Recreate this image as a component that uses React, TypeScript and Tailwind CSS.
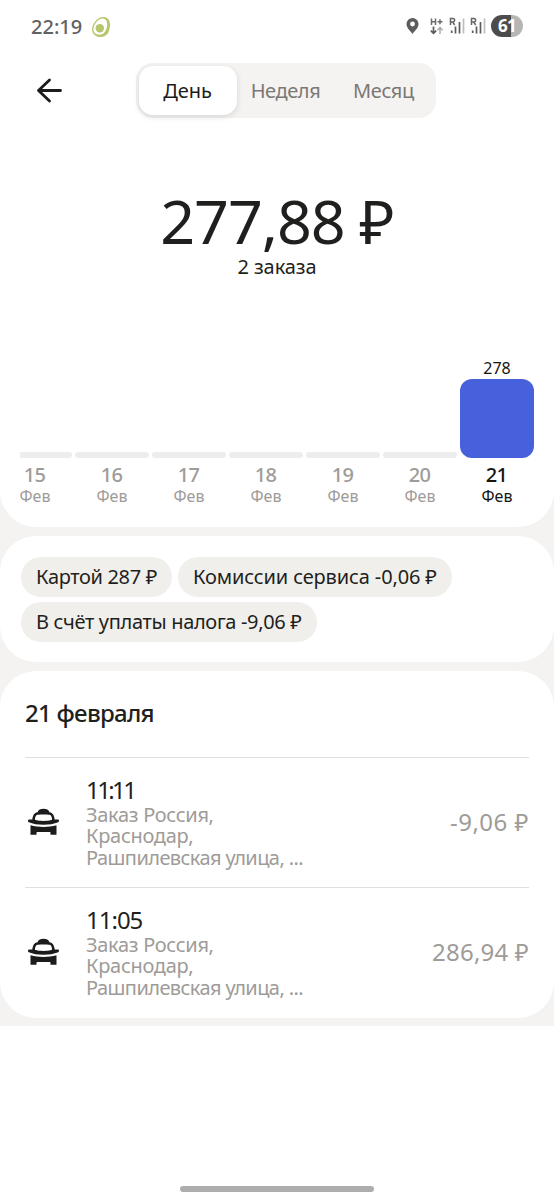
const days = ["15", "16", "17", "18", "19", "20"];

const orders = [
  { time: "11:11", timeClass: "tracking-[-2.6px]", amount: "-9,06 ₽", amountClass: "tracking-[0.5px]" },
  { time: "11:05", timeClass: "tracking-[-1px]", amount: "286,94 ₽", amountClass: "tracking-[0.2px]" },
];

export default function App() {
  return (
    <div className="flex h-[1200px] w-[554px] flex-col overflow-hidden bg-white font-['Noto_Sans',sans-serif] text-[#1f1f1d]">
      <div className="flex flex-col gap-[9px] bg-[#f4f3f1] pb-2">
        <section className="flex h-[527px] flex-col rounded-b-[36px] bg-white">
          <StatusBar />
          <Header />
          <div className="mt-[72px] flex flex-col items-center">
            <h1 className="h-[62px] whitespace-nowrap text-[61px] leading-[62px] tracking-[-1.1px]">277,88 ₽</h1>
            <p className="mt-[3px] h-6 text-[20px] leading-6 tracking-[-0.1px]">2 заказа</p>
          </div>
          <Chart />
        </section>

        <section className="flex h-[126px] flex-col gap-[5px] rounded-[36px] bg-white px-[21px] pt-[21px]">
          <div className="flex gap-[6px]">
            <Chip className="w-[151px]">
              <span className="tracking-[-0.35px]">Картой 287 ₽</span>
            </Chip>
            <Chip className="w-[274px]">
              <span className="tracking-[-0.13px]">Комиссии сервиса -0,06 ₽</span>
            </Chip>
          </div>
          <div className="flex">
            <Chip className="w-[296px]">
              <span className="tracking-[-0.33px]">В счёт уплаты налога -9,06 ₽</span>
            </Chip>
          </div>
        </section>

        <section className="h-[347px] rounded-[36px] bg-white px-[25px]">
          <h2 className="h-[86px] pt-[26px] text-[24px] font-medium leading-8 tracking-[-0.7px]">21 февраля</h2>
          {orders.map((order) => (
            <div key={order.time} className="flex h-[130px] items-center border-t border-[#dfdfde] pb-px">
              <TaxiIcon />
              <div className="ml-[26px] flex-1">
                <p className={`h-[28px] text-[24px] leading-[28px] ${order.timeClass}`}>{order.time}</p>
                <div className="text-[20px] leading-[21.6px] tracking-[-0.3px] text-[#9e9b98]">
                  <p>Заказ Россия,</p>
                  <p>Краснодар,</p>
                  <p className="tracking-[-0.58px]">Рашпилевская улица, ...</p>
                </div>
              </div>
              <p className={`text-[24px] leading-8 text-[#9e9b98] ${order.amountClass}`}>{order.amount}</p>
            </div>
          ))}
        </section>
      </div>

      <div className="mt-auto flex justify-center pb-2">
        <div className="h-[6px] w-[194px] rounded-full bg-[#adadad]" />
      </div>
    </div>
  );
}

function StatusBar() {
  return (
    <div className="flex h-[52px] items-center justify-between pl-[31px] pr-[31px] text-[#626262]">
      <div className="flex items-center gap-[9px] pt-px">
        <span className="text-[20px] font-medium leading-6">22:19</span>
        <AvocadoIcon />
      </div>
      <div className="flex items-center">
        <svg aria-hidden="true" viewBox="0 0 12 16" className="mr-[11px] h-4 w-[13px]">
          <path fill="#5c5c5c" fillRule="evenodd" d="M6 0a6 6 0 0 1 6 6c0 4-4 7-6 10C4 13 0 10 0 6a6 6 0 0 1 6-6Zm0 3.600a2.400 2.400 0 1 0 0 4.800 2.400 2.400 0 0 0 0-4.800Z" />
        </svg>
        <NetworkIcon />
        <SignalIcon />
        <SignalIcon />
        <div className="flex h-[22px] w-8 items-center justify-center rounded-full bg-linear-to-r from-[#4c4c4c] from-62% to-[#b5b5b5] to-62% text-[17px] font-bold tracking-[-0.8px] text-white">
          61
        </div>
      </div>
    </div>
  );
}

function AvocadoIcon() {
  return (
    <svg aria-hidden="true" viewBox="0 0 20 22" className="h-[22px] w-5">
      <path fill="#b5c66c" d="M12 1C16 1 19 3.500 19 8.500c0 6-2 11.500-8.500 12.500C5 21.500 1 18 1 13.500 1 8 6.500 1 12 1Z" />
      <path fill="#fff" d="M11.500 2.400c3 0 4.700 2.300 4.700 5.800 0 5-2.400 9.600-6.700 10.400-4 .6-7.100-1.600-7.100-5.300C2.400 8.700 7 2.400 11.500 2.400Z" />
      <circle cx="8.800" cy="12.300" r="4.200" fill="#b5c66c" />
    </svg>
  );
}

function NetworkIcon() {
  return (
    <svg aria-hidden="true" viewBox="0 0 14 18" className="mr-[5px] h-[18px] w-[14px]" fill="none">
      <path stroke="#6a6a6a" strokeWidth="1.500" d="M1.500 1.500v6.500M5.500 1.500v6.500M1.500 4.700h4M7.500 4.700h5M10 2.200v5" />
      <path stroke="#5c5c5c" strokeWidth="1.700" d="M3.500 9.500v7M.8 13.600l2.700 2.700 2.700-2.700" />
      <path stroke="#a8a8a8" strokeWidth="1.400" d="M10 17v-6.500M7.400 13.200l2.600-2.600 2.600 2.600" />
    </svg>
  );
}

function SignalIcon() {
  return (
    <svg aria-hidden="true" viewBox="0 0 16 18" className="mr-[5px] h-[18px] w-4" fill="none">
      <path stroke="#666" strokeWidth="1.500" d="M1.500 8V1.500h2.400a1.700 1.700 0 0 1 0 3.500H1.500M3.700 5 5.700 8" />
      <path stroke="#5c5c5c" strokeWidth="1.700" d="M2.700 13.500v2.500M6.500 9.500v7M10.500 5v11.500" />
      <path stroke="#bdbdbd" strokeWidth="1.700" d="M14.500 1.500v15" />
    </svg>
  );
}

function Header() {
  return (
    <header className="flex items-center pl-[36px] pt-[11px]">
      <svg aria-hidden="true" viewBox="0 0 26 26" className="h-[26px] w-[26px] fill-none stroke-[#1c1c1a] stroke-[2.8]">
        <path strokeLinecap="round" strokeLinejoin="round" d="M24.500 12.500H2.500M13.500 2 2.500 12.500l11 10.500" />
      </svg>
      <div className="ml-[74px] flex h-[55px] w-[300px] items-center rounded-[17px] bg-[#f4f3f1] text-[20px] tracking-[-0.1px] text-[#7b7875]">
        <div className="ml-[3px] flex h-[49px] w-[98px] items-center justify-center rounded-[14px] bg-white pr-px text-[#1c1c1a] shadow-[0_2px_6px_rgba(0,0,0,0.12)]">
          День
        </div>
        <div className="flex w-[98px] justify-center pr-px tracking-[-0.4px]">Неделя</div>
        <div className="flex w-[98px] justify-center pr-px tracking-[-0.3px]">Месяц</div>
      </div>
    </header>
  );
}

function Chart() {
  return (
    <div className="ml-5 mt-auto flex h-[172px] w-[514px] items-end justify-end gap-[3px] overflow-hidden pb-[20px]">
      {days.map((day) => (
        <div key={day} className="flex w-[74px] shrink-0 flex-col items-center text-[#9e9b98]">
          <div className="h-[6px] w-full rounded-full bg-[#ededed]" />
          <DayLabel day={day} />
        </div>
      ))}
      <div className="flex w-[74px] shrink-0 flex-col items-center text-[#141412]">
        <span className="h-[21px] text-[16px] leading-5">278</span>
        <div className="h-[79px] w-full rounded-[12px] bg-[#4760db]" />
        <DayLabel day="21" />
      </div>
    </div>
  );
}

function DayLabel({ day }: { day: string }) {
  return (
    <>
      <span className="mt-[6px] h-[22px] pr-px text-[20px] font-medium leading-[22px] tracking-[-0.8px]">{day}</span>
      <span className="h-[21px] text-[16px] leading-5">Фев</span>
    </>
  );
}

function Chip({ className, children }: { className: string; children: React.ReactNode }) {
  return (
    <div className={`flex h-[40px] shrink-0 items-center whitespace-nowrap rounded-full bg-[#f0efeb] pb-px pl-[15px] text-[20px] ${className}`}>
      {children}
    </div>
  );
}

function TaxiIcon() {
  return (
    <svg aria-hidden="true" viewBox="0 0 32 28" className="ml-[3px] h-7 w-8" fill="#1c1c1a">
      <path
        fillRule="evenodd"
        d="M9.500 4.300C10.500 1.300 12.500.8 15.500.8s5 .5 6 3.500c3.400.6 4.600 3 5.200 7.200H30c1.300 0 1.400 2.200.2 2.800-4 1.700-9.200 2.500-14.700 2.500S4.800 16 .8 14.300c-1.200-.6-1.100-2.800.2-2.800h3.300c.6-4.200 1.800-6.600 5.200-7.200ZM9.500 6.700C7.700 7.100 7 9 6.900 11.700c4.800 1.600 12.400 1.600 17.200 0-.1-2.700-.8-4.600-2.600-5-2.500-.4-9.500-.4-12 0Z"
      />
      <path d="M2.500 17.300c8 2.100 18 2.100 26 0v9.400h-6v-1.700c0-.6-.4-1-1-1h-12c-.6 0-1 .4-1 1v1.700h-6v-9.400Z" />
    </svg>
  );
}
